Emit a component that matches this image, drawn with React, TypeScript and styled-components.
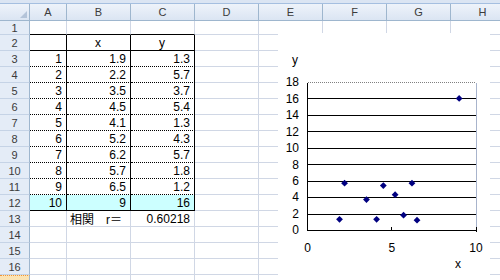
import React from "react";
import styled, { createGlobalStyle } from "styled-components";

const GlobalStyle = createGlobalStyle`
  body {
    margin: 0;
    background: #ffffff;
    font-family: "Liberation Sans", "Noto Sans CJK JP", sans-serif;
  }
`;

const Sheet = styled.div`
  position: relative;
  width: 500px;
  height: 280px;
  overflow: hidden;
  background: #ffffff;
`;

const TopStrip = styled.div`
  height: 3px;
  background: #dbe5f3;
  border-bottom: 1px solid #a5bfe0;
`;

const Grid = styled.div`
  display: grid;
  grid-template-columns: 30px 37px repeat(7, 64px);
  grid-template-rows: 17px 14px repeat(16, 16px);
`;

const Corner = styled.div`
  position: relative;
  box-sizing: border-box;
  background: linear-gradient(to bottom, #eef3fa, #dbe5f3);
  border-right: 1px solid #9eb6ce;
  border-bottom: 1px solid #9eb6ce;

  &::after {
    content: "";
    position: absolute;
    right: 2px;
    bottom: 2px;
    border-left: 7px solid transparent;
    border-bottom: 7px solid #b4c4d9;
  }
`;

const ColHeader = styled.div`
  box-sizing: border-box;
  display: flex;
  align-items: center;
  justify-content: center;
  background: linear-gradient(to bottom, #eef3fa, #dbe5f3);
  border-right: 1px solid #9eb6ce;
  border-bottom: 1px solid #9eb6ce;
  color: #3b3b3b;
  font-size: 11px;
`;

const RowHeader = styled.div<{ $active?: boolean }>`
  box-sizing: border-box;
  display: flex;
  align-items: center;
  justify-content: center;
  background: ${(p) => (p.$active ? "#fbe3b3" : "#e4ecf7")};
  border-right: 1px solid #9eb6ce;
  border-bottom: 1px solid #c5d3e6;
  border-top: ${(p) => (p.$active ? "1px dotted #f29536" : "none")};
  color: #3b3b3b;
  font-size: 11px;
`;

type Edge = "grid" | "line" | "dot";

const edge = (e: Edge) =>
  e === "line" ? "1px solid #000" : e === "dot" ? "1px dotted #000" : "1px solid #d0d7e5";

const Cell = styled.div<{ $right: Edge; $bottom: Edge; $align: string; $bg?: string }>`
  box-sizing: border-box;
  display: flex;
  align-items: center;
  justify-content: ${(p) => p.$align};
  padding: 0 4px 0 3px;
  background: ${(p) => p.$bg || "transparent"};
  border-right: ${(p) => edge(p.$right)};
  border-bottom: ${(p) => edge(p.$bottom)};
  font-size: 12px;
  color: #000;
  white-space: nowrap;
`;

const ChartBox = styled.div`
  position: absolute;
  left: 278px;
  top: 33px;
  width: 212px;
  height: 260px;
  background: #ffffff;
`;

const cols = ["A", "B", "C", "D", "E", "F", "G", "H"];

const data: [number, number, number][] = [
  [1, 1.9, 1.3],
  [2, 2.2, 5.7],
  [3, 3.5, 3.7],
  [4, 4.5, 5.4],
  [5, 4.1, 1.3],
  [6, 5.2, 4.3],
  [7, 6.2, 5.7],
  [8, 5.7, 1.8],
  [9, 6.5, 1.2],
  [10, 9, 16],
];

type Spec = { text?: string; right: Edge; bottom: Edge; align: string; bg?: string };

function cellSpec(r: number, c: number): Spec {
  const s: Spec = { right: "grid", bottom: "grid", align: "flex-end" };
  if (c > 2) return s;
  if (r === 1) s.bottom = "line";
  if (r === 2) {
    s.right = "line";
    s.bottom = "line";
    s.align = "center";
    s.text = ["", "x", "y"][c];
  }
  if (r >= 3 && r <= 12) {
    const row = data[r - 3];
    s.right = "line";
    s.bottom = r === 12 ? "line" : "dot";
    s.text = String(row[c]);
    if (r === 12) s.bg = "#ccffff";
  }
  if (r === 13) {
    if (c === 1) {
      s.text = "相関　r＝";
      s.align = "flex-start";
    }
    if (c === 2) s.text = "0.60218";
  }
  return s;
}

const px = (v: number) => 29.5 + v * 16.85;
const py = (v: number) => 197 - (v * 148) / 18;

function ScatterChart() {
  const font = { fontFamily: "Liberation Sans, sans-serif", fontSize: 12 };
  return (
    <svg width="212" height="260" shapeRendering="crispEdges">
      {[2, 4, 6, 8, 10, 12, 14, 16].map((v) => (
        <line key={v} x1={29.5} x2={198} y1={Math.round(py(v)) + 0.5} y2={Math.round(py(v)) + 0.5} stroke="#000" />
      ))}
      <line x1={29.5} x2={198} y1={49.5} y2={49.5} stroke="#808080" strokeDasharray="1 1" />
      <line x1={198.5} x2={198.5} y1={49.5} y2={197} stroke="#a8b4cc" />
      <line x1={29.5} x2={29.5} y1={49.5} y2={197.5} stroke="#000" />
      <line x1={29.5} x2={198.5} y1={197.5} y2={197.5} stroke="#000" />
      <line x1={113.5} x2={113.5} y1={193.5} y2={197.5} stroke="#000" />
      <line x1={198.5} x2={198.5} y1={193.5} y2={198.5} stroke="#000" />
      {[0, 2, 4, 6, 8, 10, 12, 14, 16, 18].map((v) => (
        <text key={v} x={21} y={py(v)} dy="0.36em" textAnchor="end" style={font}>
          {v}
        </text>
      ))}
      {[0, 5, 10].map((v) => (
        <text key={v} x={px(v)} y={215} dy="0.36em" textAnchor="middle" style={font}>
          {v}
        </text>
      ))}
      <text x={17} y={27} dy="0.36em" textAnchor="middle" style={font}>
        y
      </text>
      <text x={180} y={231} dy="0.36em" textAnchor="middle" style={font}>
        x
      </text>
      <g shapeRendering="geometricPrecision">
        {data.map(([n, x, y]) => {
          const cx = px(x);
          const cy = py(y);
          const d = 3.4;
          return (
            <polygon
              key={n}
              points={`${cx},${cy - d} ${cx + d},${cy} ${cx},${cy + d} ${cx - d},${cy}`}
              fill="#000080"
            />
          );
        })}
      </g>
    </svg>
  );
}

export default function App() {
  const rowNums = Array.from({ length: 17 }, (_, i) => i + 1);
  return (
    <>
      <GlobalStyle />
      <Sheet>
        <TopStrip />
        <Grid>
          <Corner />
          {cols.map((c) => (
            <ColHeader key={c}>{c}</ColHeader>
          ))}
          {rowNums.map((r) => (
            <React.Fragment key={r}>
              <RowHeader $active={r === 17}>{r < 17 ? r : null}</RowHeader>
              {cols.map((c, ci) => {
                const s = cellSpec(r, ci);
                return (
                  <Cell key={c} $right={s.right} $bottom={s.bottom} $align={s.align} $bg={s.bg}>
                    {s.text}
                  </Cell>
                );
              })}
            </React.Fragment>
          ))}
        </Grid>
        <ChartBox>
          <ScatterChart />
        </ChartBox>
      </Sheet>
    </>
  );
}
